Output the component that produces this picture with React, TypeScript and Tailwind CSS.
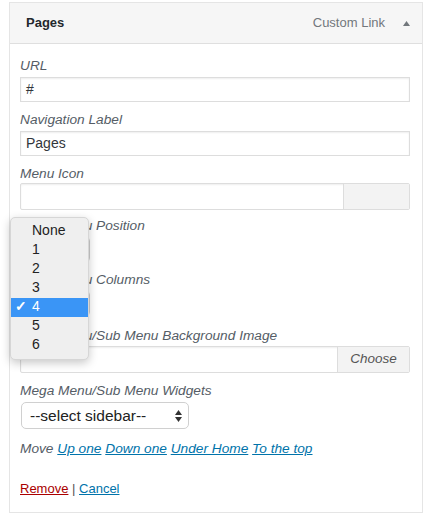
import React from "react";

const Label = ({ children }: { children: React.ReactNode }) => (
  <div className="h-[18px] leading-[18px] text-[13.7px] italic text-[#555d66] whitespace-nowrap">{children}</div>
);

const Input = ({ value }: { value?: string }) => (
  <div className="mt-[2px] h-[25px] w-full border border-[#dddddd] bg-white shadow-[inset_0_1px_2px_rgba(0,0,0,0.07)] flex items-center pl-[5px] text-[14px] text-[#32373c]">
    {value}
  </div>
);

export default function App() {
  const items = ["None", "1", "2", "3", "4", "5", "6"];
  return (
    <div className="relative w-[432px] h-[519px] bg-white" style={{ fontFamily: '"Liberation Sans", Arial, sans-serif' }}>
      <div className="ml-[9px] mt-[2px] w-[414px] h-[511px] border border-[#e5e5e5] flex flex-col">
        <div className="h-[41px] bg-[#f6f6f6] border-b border-[#dfdfdf] flex items-center pl-[16px] pr-[12px]">
          <div className="text-[13px] font-bold text-[#23282d]">Pages</div>
          <div className="ml-auto text-[13px] text-[#72777c]">Custom Link</div>
          <svg className="ml-[18px]" width="7" height="5" viewBox="0 0 7 5">
            <path d="M3.5 0 L7 5 L0 5 Z" fill="#72777c" />
          </svg>
        </div>
        <div className="flex flex-col pl-[10px] pr-[12px] pt-[13px]">
          <div className="mb-[9px]">
            <Label>URL</Label>
            <Input value="#" />
          </div>
          <div className="mb-[9px]">
            <Label>Navigation Label</Label>
            <Input value="Pages" />
          </div>
          <div className="mb-[7px]">
            <Label>Menu Icon</Label>
            <div className="h-[27px] w-full flex border border-[#dddddd] rounded-[2px] bg-white shadow-[inset_0_1px_2px_rgba(0,0,0,0.07)]">
              <div className="flex-1" />
              <div className="w-[66px] bg-[#f3f3f3] border-l border-[#dddddd]" />
            </div>
          </div>
          <div className="mb-[9px]">
            <Label>Mega Menu Position</Label>
            <div className="mt-[2px] h-[25px] w-[70px] border border-[#cccccc] rounded-[4px] bg-white" />
          </div>
          <div className="mb-[11px]">
            <Label>Mega Menu Columns</Label>
            <div className="mt-[2px] h-[25px] w-[70px] border border-[#cccccc] rounded-[4px] bg-white" />
          </div>
          <div className="mb-[9px]">
            <Label>Mega Menu/Sub Menu Background Image</Label>
            <div className="mt-[1px] h-[27px] w-full flex border border-[#dddddd] rounded-[2px] bg-white shadow-[inset_0_1px_2px_rgba(0,0,0,0.07)]">
              <div className="flex-1" />
              <div className="w-[72px] bg-[#f3f3f3] border-l border-[#dddddd] flex items-center justify-center text-[13.5px] italic text-[#555]">Choose</div>
            </div>
          </div>
          <div className="mb-[11px]">
            <Label>Mega Menu/Sub Menu Widgets</Label>
            <div className="mt-[2px] ml-[1px] h-[27px] w-[168px] border border-[#d0d0d0] rounded-[5px] bg-white flex items-center pl-[8px] pr-[6px] text-[15.5px] text-[#222]">
              <span>--select sidebar--</span>
              <svg className="ml-auto" width="7" height="12" viewBox="0 0 7 12">
                <path d="M3.5 0 L7 5 L0 5 Z" fill="#333" />
                <path d="M3.5 12 L7 7 L0 7 Z" fill="#333" />
              </svg>
            </div>
          </div>
          <div className="h-[18px] leading-[18px] text-[13.7px] italic text-[#555d66] whitespace-nowrap">
            Move{" "}
            <a className="text-[#0073aa] underline">Up one</a>{" "}
            <a className="text-[#0073aa] underline">Down one</a>{" "}
            <a className="text-[#0073aa] underline">Under Home</a>{" "}
            <a className="text-[#0073aa] underline">To the top</a>
          </div>
          <div className="mt-[22px] h-[18px] leading-[18px] text-[13px] text-[#555]">
            <a className="text-[#aa0000] underline">Remove</a>
            <span className="text-[#555]"> | </span>
            <a className="text-[#0073aa] underline">Cancel</a>
          </div>
        </div>
      </div>
      <div className="absolute left-[10px] top-[215px] w-[79px] py-[4px] bg-[#efefef] rounded-[5px] border border-[#d6d6d6] shadow-[0_3px_10px_rgba(0,0,0,0.22)]">
        {items.map((it) => (
          <div
            key={it}
            className={
              it === "4"
                ? "h-[19px] pb-[2px] flex items-center bg-[#3a95f6] text-white text-[14px]"
                : "h-[19px] pb-[2px] flex items-center text-[#222] text-[14px]"
            }
          >
            <span className="w-[21px] pl-[4px] text-[14px] font-bold">{it === "4" ? "✓" : ""}</span>
            <span>{it}</span>
          </div>
        ))}
      </div>
    </div>
  );
}
